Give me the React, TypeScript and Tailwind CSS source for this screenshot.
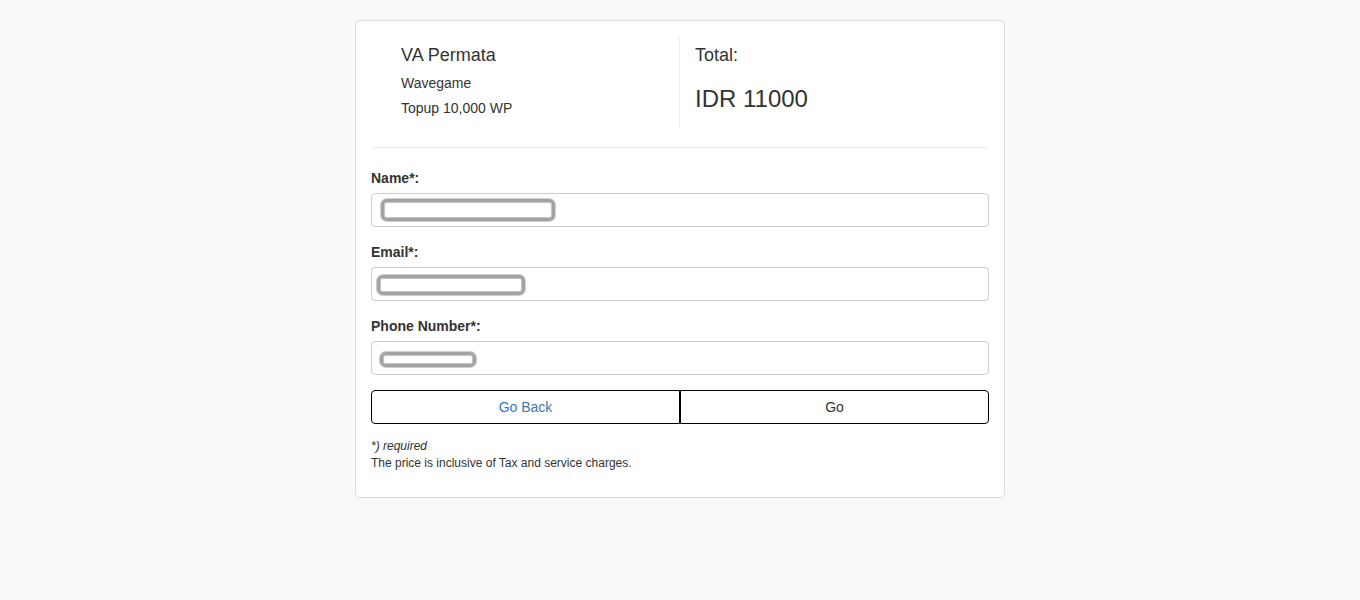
const font = { fontFamily: '"Liberation Sans", Arial, sans-serif' }

function Scribble({ w, h }: { w: number; h: number }) {
  return (
    <span
      className="inline-block rounded-[6px] border-[3px] border-[#a3a3a3] bg-white shadow-[0_0_0_1px_#cfcfcf,inset_0_0_0_1px_#c4c4c4]"
      style={{ width: w, height: h }}
    />
  )
}

function Field({ label, pad, top, w, h }: { label: string; pad: string; top: string; w: number; h: number }) {
  return (
    <div className="mb-[15px]">
      <label className="block mb-[5px] text-sm leading-5 font-bold text-[#333]">{label}</label>
      <div className={`h-[34px] rounded-[4px] border border-[#ccc] bg-white ${pad} ${top}`}>
        <Scribble w={w} h={h} />
      </div>
    </div>
  )
}

export default function App() {
  return (
    <div className="min-h-screen bg-[#f9f9f9] pt-5 text-[#333]" style={font}>
      <div className="mx-auto w-[650px] rounded-[4px] border border-[#ddd] bg-white p-[15px]">
        {/* summary */}
        <div className="flex">
          <div className="w-1/2 border-r border-[#eee] pl-[30px] pb-[7px]">
            <h4 className="mt-[9px] text-lg leading-5">VA Permata</h4>
            <p className="mt-[6px] text-sm leading-[25px]">Wavegame</p>
            <p className="text-sm leading-[25px]">Topup 10,000 WP</p>
          </div>
          <div className="w-1/2 pl-[15px]">
            <h4 className="mt-[9px] text-lg leading-5">Total:</h4>
            <p className="mt-[19px] text-2xl leading-[30px]">IDR 11000</p>
          </div>
        </div>

        <hr className="mt-[19px] mb-5 border-t border-[#eee]" />

        <Field label="Name*:" pad="pl-[9px]" top="pt-[5px]" w={174} h={22} />
        <Field label="Email*:" pad="pl-[5px]" top="pt-[7px]" w={148} h={20} />
        <Field label="Phone Number*:" pad="pl-[8px]" top="pt-[8px]" w={96} h={15} />

        <div className="grid grid-cols-2">
          <button className="h-[34px] rounded-l-[4px] border border-black bg-white text-sm text-[#337ab7]">Go Back</button>
          <button className="h-[34px] rounded-r-[4px] border border-black bg-white text-sm text-[#333]">Go</button>
        </div>

        <div className="mt-[14px] mb-[10px] text-xs leading-[17px]">
          <i>*) required</i>
          <br />
          The price is inclusive of Tax and service charges.
        </div>
      </div>
    </div>
  )
}
